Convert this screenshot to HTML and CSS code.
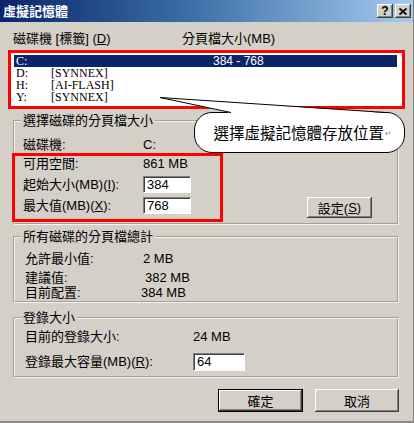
FILE: index.html
```html
<!DOCTYPE html>
<html lang="zh-Hant">
<head>
<meta charset="utf-8">
<title>虛擬記憶體</title>
<link rel="stylesheet" href="styles.css">
</head>
<body>
<div class="win">
  <div class="titlebar">
    <span class="title">虛擬記憶體</span>
    <span class="tbtn q">?</span>
    <span class="tbtn x"><svg width="8" height="7" viewBox="0 0 8 7"><path d="M0.5 0.5 L7.5 6.5 M7.5 0.5 L0.5 6.5" stroke="#000" stroke-width="1.8" fill="none"/></svg></span>
  </div>

  <div class="hdr">
    <span class="hdr-drive">磁碟機 [標籤] (<u>D</u>)</span>
    <span>分頁檔大小(MB)</span>
  </div>

  <div class="listwrap">
    <div class="list">
      <div class="row sel"><span class="d">C:</span><span class="l"></span><span class="s">384 - 768</span></div>
      <div class="row"><span class="d">D:</span><span class="l">[SYNNEX]</span><span class="s"></span></div>
      <div class="row"><span class="d">H:</span><span class="l">[AI-FLASH]</span><span class="s"></span></div>
      <div class="row"><span class="d">Y:</span><span class="l">[SYNNEX]</span><span class="s"></span></div>
    </div>
  </div>

  <fieldset class="grp g1">
    <legend>選擇磁碟的分頁檔大小</legend>
    <div class="line first"><span class="lbl">磁碟機:</span><span>C:</span></div>
    <div class="redrow">
      <div class="box2">
        <div class="line"><span class="lbl">可用空間:</span><span>861 MB</span></div>
        <div class="line inp"><span class="lbl">起始大小(MB)(<u>I</u>):</span><span class="field">384</span></div>
        <div class="line inp"><span class="lbl">最大值(MB)(<u>X</u>):</span><span class="field">768</span></div>
      </div>
      <span class="btn set">設定(<u>S</u>)</span>
    </div>
  </fieldset>

  <fieldset class="grp g2">
    <legend>所有磁碟的分頁檔總計</legend>
    <div class="line r1"><span class="lbl">允許最小值:</span><span>2 MB</span></div>
    <div class="line r2"><span class="lbl">建議值:</span><span class="v2">382 MB</span></div>
    <div class="line r3"><span class="lbl">目前配置:</span><span class="v3">384 MB</span></div>
  </fieldset>

  <fieldset class="grp g3">
    <legend>登錄大小</legend>
    <div class="line r1"><span class="lbl">目前的登錄大小:</span><span>24 MB</span></div>
    <div class="line r2"><span class="lbl">登錄最大容量(MB)(<u>R</u>):</span><span class="field wide">64</span></div>
  </fieldset>

  <div class="actions">
    <span class="btn ok">確定</span>
    <span class="btn cancel">取消</span>
  </div>

  <div class="bubble">選擇虛擬記憶體存放位置<span class="mark">↵</span></div>
  <svg class="tail" width="240" height="24" viewBox="0 0 240 24">
    <polygon points="10,5.5 81,21 236,21" fill="#fff"/>
    <line x1="10" y1="5.5" x2="81" y2="20.5" stroke="#000" stroke-width="1"/>
    <line x1="10" y1="5.5" x2="236" y2="20.5" stroke="#000" stroke-width="1"/>
  </svg>
</div>
</body>
</html>
```

FILE: styles.css
```css
html, body {
  margin: 0;
  padding: 0;
  background: #d4d0c8;
}

.win {
  position: relative;
  width: 414px;
  height: 423px;
  box-sizing: border-box;
  background: #d4d0c8;
  border-right: 1px solid #808080;
  border-bottom: 2px solid #8c8a86;
  display: flex;
  flex-direction: column;
  font-family: "Liberation Sans", "Noto Sans CJK TC", sans-serif;
  font-size: 13px;
  color: #000;
  overflow: hidden;
}

u { text-decoration: underline; }

/* title bar */
.titlebar {
  height: 22px;
  flex: none;
  display: flex;
  align-items: center;
  padding: 0 2px 0 3px;
  background: linear-gradient(to right, #0a246a 0%, #3a6ea5 45%, #a6caf0 100%);
  gap: 2px;
}
.title {
  flex: 1;
  color: #fff;
  font-weight: bold;
  font-size: 13px;
  line-height: 22px;
  font-family: "Noto Sans CJK TC", sans-serif;
}
.tbtn {
  width: 16px;
  height: 14px;
  box-sizing: border-box;
  background: #d4d0c8;
  box-shadow: inset -1px -1px #404040, inset 1px 1px #fff, inset -2px -2px #808080;
  display: flex;
  align-items: center;
  justify-content: center;
  font-weight: bold;
  font-size: 12px;
  line-height: 14px;
}
.tbtn.q { padding-bottom: 1px; }

/* column header */
.hdr {
  flex: none;
  display: flex;
  padding: 10px 0 0 13px;
  height: 14px;
  line-height: 14px;
}
.hdr-drive { width: 169px; }

/* drive list with red annotation frame */
.listwrap {
  flex: none;
  margin: 4px 0 0 8px;
  width: 397px;
  height: 59px;
  box-sizing: border-box;
  border: 3px solid #ff0000;
}
.list {
  height: 100%;
  box-sizing: border-box;
  background: #fff;
  padding: 2px 5px 3px 3px;
}
.row {
  display: flex;
  height: 12px;
  line-height: 12px;
  font-family: "Liberation Serif", serif;
  font-size: 12px;
}
.row.sel { background: #0a246a; color: #fff; }
.row .d { width: 35px; padding-left: 2px; flex: none; }
.row .l { width: 162px; flex: none; }
.row .s { font-family: "Liberation Sans", sans-serif; }

/* group boxes */
.grp {
  flex: none;
  box-sizing: border-box;
  width: 386px;
  margin: 0 0 0 13px;
  padding: 0;
  border: 2px groove #f4f3f0;
  min-inline-size: 0;
}
.grp legend {
  padding: 0 2px;
  margin-left: 6px;
  line-height: 14px;
  height: 14px;
}
.line {
  display: flex;
  align-items: center;
  line-height: 14px;
  height: 14px;
}

.g1 { margin-top: 5px; padding-bottom: 1px; }
.g1 .line { padding-left: 8px; }
.g1 .line.first { margin-top: 10px; }
.g1 .lbl { width: 120px; flex: none; }

.redrow {
  display: flex;
  align-items: flex-end;
  margin: 1px 0 0 -3px;
}
.box2 {
  width: 211px;
  box-sizing: border-box;
  border: 3px solid #ff0000;
  padding: 1px 0 5px 0;
}
.box2 .line.inp { height: 17px; margin-top: 4px; }
.box2 .line.inp:first-of-type { margin-top: 5px; }
.box2 .line + .line.inp { margin-top: 5px; }
.box2 .line.inp + .line.inp { margin-top: 4px; }

.field {
  width: 48px;
  height: 17px;
  box-sizing: border-box;
  background: #fff;
  border: 1px solid;
  border-color: #808080 #fff #fff #808080;
  box-shadow: inset 1px 1px #404040;
  padding-left: 3px;
  line-height: 15px;
  font-size: 13px;
}
.field.wide { width: 52px; height: 18px; line-height: 16px; }

.btn {
  display: flex;
  align-items: center;
  justify-content: center;
  box-sizing: border-box;
  background: #d4d0c8;
  box-shadow: inset -1px -1px #404040, inset 1px 1px #fff, inset -2px -2px #808080;
}
.set {
  width: 65px;
  height: 21px;
  margin: 0 0 4px 84px;
}

.g2 { margin-top: 5px; padding-bottom: 1px; }
.g2 .line { padding-left: 10px; }
.g2 .lbl { width: 118px; flex: none; }
.g2 .r1 { margin-top: 8px; }
.g2 .r2 { margin-top: 5px; }
.g2 .r3 { margin-top: 1px; }
.g2 .v2 { padding-left: 2px; }
.g2 .v3 { margin-left: -2px; }

.g3 { margin-top: 8px; padding-bottom: 5px; }
.g3 .line { padding-left: 10px; }
.g3 .lbl { width: 168px; flex: none; }
.g3 .r1 { margin-top: 5px; }
.g3 .r2 { margin-top: 9px; height: 18px; }

.actions {
  flex: none;
  display: flex;
  justify-content: flex-end;
  gap: 12px;
  margin-top: 11px;
  padding-right: 14px;
}
.actions .btn { height: 23px; }
.ok {
  width: 85px;
  box-shadow: inset 0 0 0 1px #000, inset -2px -2px #404040, inset 2px 2px #fff, inset -3px -3px #808080;
}
.cancel { width: 84px; }

/* annotation callout (overlay) */
.bubble {
  position: absolute;
  left: 194px;
  top: 112px;
  width: 211px;
  height: 41px;
  box-sizing: border-box;
  background: #fff;
  border: 1px solid #000;
  border-radius: 18px;
  display: flex;
  align-items: center;
  justify-content: center;
  font-family: "Noto Sans CJK TC", sans-serif;
  font-size: 15.5px;
  padding: 0 0 1px 6px;
}
.mark {
  font-family: "DejaVu Sans", sans-serif;
  font-size: 8px;
  color: #888;
  margin-left: 1px;
  margin-top: 2px;
}
.tail {
  position: absolute;
  left: 150px;
  top: 92px;
}
```
